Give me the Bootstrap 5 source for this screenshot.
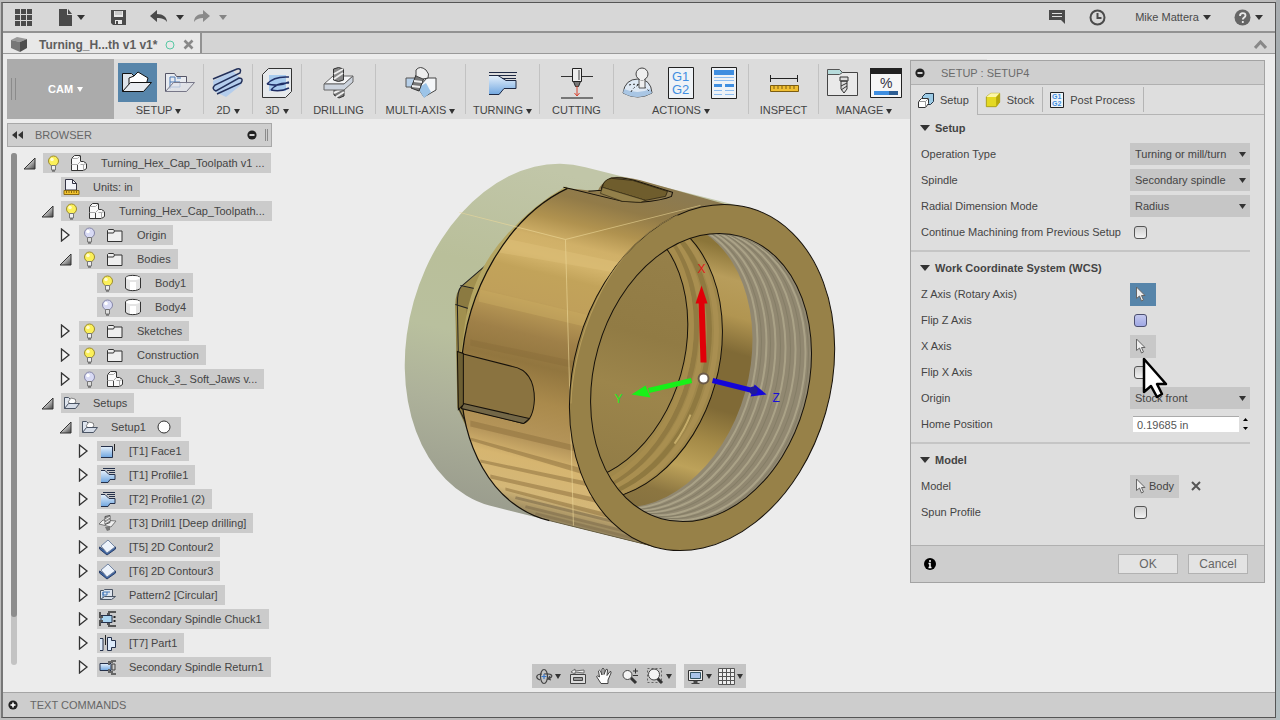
<!DOCTYPE html>
<html lang="en">
<head>
<meta charset="utf-8">
<meta name="viewport" content="width=device-width, initial-scale=1">
<title>Turning_Hex_Cap_Toolpath v1</title>
<link href="https://cdn.jsdelivr.net/npm/bootstrap@5.3.0/dist/css/bootstrap.min.css" rel="stylesheet">
<script src="https://cdn.jsdelivr.net/npm/bootstrap@5.3.0/dist/js/bootstrap.bundle.min.js" defer></script>
<style>
  :root { --ink:#444; --chip:#cbcbcb; --blue:#5785aa; }
  body { font-family:"Liberation Sans",Arial,sans-serif; font-size:11px; line-height:16px; color:var(--ink);
         background:linear-gradient(180deg,#a9adb0,#8fa5a8 50%,#b4bfc2); overflow:hidden; }
  button, select, input { font:inherit; color:inherit; }
  button { border:0; background:none; padding:0; white-space:nowrap; }
  .app-frame { margin-right:4px; padding-bottom:2px; background:#bcbcbc; }
  .app-shell { border:1px solid #555; border-left:2px solid #777; margin:2px 0 0 1px; background:#ececec; }
  .top-bar { height:30px; background:#d7d7d7; border-bottom:2px solid #929292; color:#4a4a4a; }
  .top-bar button { height:28px; display:flex; align-items:center; justify-content:center; }
  .help-btn { width:30px; margin-right:12px; }
  .crt { display:inline-block; border:3px solid transparent; border-top:5px solid #333; border-bottom:0; vertical-align:middle; }
  .top-bar .crt { border-width:4px 4px 0; border-top-width:5px; }
  .crt.dim { border-top-color:#858585; }
  .doc-tabs { height:21px; background:#d4d4d4; border-bottom:1px solid #999; }
  .doc-tab { width:199px; background:#e8e8e8; border-right:2px solid #929292; font-weight:bold; font-size:12px; color:#5e5e5e; padding:3px 0 0 8px; }
  .ribbon { margin:5px 288px 0 4px; height:60px; background:#dcdcdc; }
  .cam-btn { width:107px; background:#ababab; color:#fff; font-weight:bold; }
  .cam-btn .crt { border-top-color:#fff; }
  .grip { width:5px; height:22px; border:solid #8b8b8b; border-width:0 1px; }
  .grp { border-right:1px solid #c2c2c2; margin:5px 0; height:50px; white-space:nowrap; }
  .grp:last-child { border:0; }
  .grp .icons { height:39px; display:flex; justify-content:center; align-items:center; margin-top:-1px; gap:4px; }
  .grp .icons button { width:39px; height:39px; display:flex; align-items:center; justify-content:center; }
  .grp .icons button.on { background:var(--blue); }
  .grp .cap { display:block; width:100%; text-align:center; line-height:14px; margin-top:1px; }
  .g-s { width:49px; } .g-i { width:70px; } .g-m { width:74px; } .g-l { width:90px; } .g-x { width:135px; }
  .browser { width:265px; margin:4px 0 0 4px; position:relative; }
  .browser-head { height:24px; background:#cecece; border:1px solid #a8a8a8; padding:0 3px 0 4px; color:#666; }
  .scroll-track { width:6px; height:512px; background:#c3c3c3; border-radius:3px; margin:6px 3px 0 4px; }
  .scroll-thumb { height:464px; background:#8d8d8d; border-radius:3px; }
  .tree { margin-top:4px; }
  .tree, .tree ul { list-style:none; padding:0; margin-bottom:0; }
  .tree ul { padding-left:18px; }
  .tree .node { display:flex; align-items:center; height:24px; white-space:nowrap; }
  .tw { width:23px; height:16px; display:flex; padding-left:3px; align-items:center; flex:none; }
  .chip { display:flex; align-items:center; height:20px; background:var(--chip); padding-right:7px; }
  .chip svg { width:20px; height:18px; flex:none; }
  .chip svg + svg { margin-left:6px; }
  .chip span { margin-left:12px; }
  .scene { position:absolute; inset:0; width:100%; height:100%; }
  .view-bar { position:absolute; bottom:4px; left:0; right:0; padding-right:1px; }
  .view-bar > div { background:#c4c4c4; height:24px; }
  .view-bar button { height:24px; display:flex; align-items:center; justify-content:center; width:26px; }
  .view-bar button.wide { width:33px; gap:2px; }
  .view-bar button.mid { width:31px; gap:2px; }
  .dlg { position:absolute; right:10px; top:6px; width:355px; border:1px solid #a3a3a3; background:#dedede; }
  .dlg-head { height:24px; background:#cfcfcf; border-bottom:1px solid #b0b0b0; color:#6b6b6b; padding-left:4px; }
  .dlg-tabs { height:30px; padding-top:2px; box-shadow:inset 0 -1px #b4b4b4; }
  .dlg-tabs button { border-right:1px solid #b4b4b4; margin-bottom:3px; display:flex; align-items:center; padding:0 8px 0 7px; gap:6px; }
  .dlg-tabs button.on { background:#dedede; margin-bottom:0; padding-bottom:3px; }
  .sect { border-bottom:2px solid #c5c5c5; margin-right:14px; padding-bottom:5px; margin-bottom:3px; }
  .sect:last-child { border:0; padding-bottom:20px; margin-bottom:0; }
  .sect h2 { font-size:11px; font-weight:bold; line-height:26px; margin:0; padding-left:9px; display:flex; align-items:center; gap:5px; }
  .sect h2 .crt { border-width:6px 5px 0; }
  .prop { display:flex; align-items:center; height:26px; padding-left:10px; position:relative; }
  .prop > label { width:209px; flex:none; }
  .sel { appearance:none; width:120px; height:22px; border:0; border-radius:0; padding:0 5px; color:#444;
    background:#c6c6c6 url("data:image/svg+xml,%3Csvg xmlns='http://www.w3.org/2000/svg' width='7' height='5'%3E%3Cpath d='M0 0h7L3.5 5z' fill='%23333'/%3E%3C/svg%3E") no-repeat right 4px center; }
  .tick { appearance:none; width:13px; height:13px; margin:0 0 0 4px; border:1px solid #555; border-radius:3px; background:linear-gradient(#cfcfcf,#f2f2f2); }
  .tick.hot { background:linear-gradient(#c3c8ee,#a0a8e4); border-color:#4c4f70; }
  .pick { height:23px; background:#c8c8c8; display:flex; align-items:center; padding:0 5px; gap:2px; }
  .pick.on { background:var(--blue); }
  .num { width:106px; height:16px; border:0; border-top:1px solid #aaa; background:#fff; padding:0 4px; margin-left:3px; color:#555; }
  .spin { width:12px; } .spin button { display:block; height:9px; line-height:0; width:12px; }
  .dlg-foot { height:37px; background:#cecece; border-top:1px solid #b0b0b0; padding:0 16px 0 13px; }
  .dlg-foot .act { width:60px; height:20px; background:#e3e3e3; border:1px solid #b2b2b2; font-size:12px; line-height:16px; color:#666; margin-left:10px; }
  .cursor { position:absolute; left:230px; top:-2px; z-index:2; }
  .cmd-bar { height:25px; background:#cdcdcd; border-top:1px solid #a5a5a5; color:#666; padding-left:5px; gap:12px; }
</style>
</head>
<body>
<svg width="0" height="0" class="position-absolute" aria-hidden="true">
  <defs>
    <linearGradient id="gBlue" x1="0" y1="0" x2="0" y2="1"><stop offset="0" stop-color="#e8f2fc"/><stop offset="1" stop-color="#6fa6e0"/></linearGradient>
    <linearGradient id="gTri" x1="0" y1="0" x2="1" y2="1"><stop offset=".3" stop-color="#eee"/><stop offset="1" stop-color="#444"/></linearGradient>
    <symbol id="open" viewBox="0 0 13 13"><path d="M12 1v11H1z" fill="url(#gTri)" stroke="#333"/></symbol>
    <symbol id="shut" viewBox="0 0 13 14"><path d="M2.500 1v12L10 7z" fill="#f4f4f4" stroke="#333" stroke-width="1.300"/></symbol>
    <symbol id="bulb" viewBox="0 0 20 18"><circle cx="10.500" cy="7" r="5" fill="#fbf05a" stroke="#9c8b2c"/><circle cx="9" cy="5.500" r="1.800" fill="#fffbd0"/><path d="M8.500 11.500h4v4.500h-4z" fill="#eee" stroke="#777"/><path d="M9 17h3" stroke="#444"/></symbol>
    <symbol id="bulbOff" viewBox="0 0 20 18"><circle cx="10.500" cy="7" r="5" fill="#d8daf4" stroke="#8586a8"/><circle cx="9" cy="5.500" r="1.800" fill="#fff"/><path d="M8.500 11.500h4v4.500h-4z" fill="#ddd" stroke="#777"/><path d="M9 17h3" stroke="#444"/></symbol>
    <symbol id="comp" viewBox="0 0 20 18"><path d="M2.500 4.500l3-3h6v6h3l3 2v5l-3 2H2.500z" fill="#fafafa" stroke="#333"/><path d="M2.500 4.500h6M8.500 4.500l3-3M2.500 10.500h6l3-3M11.500 10.500h3l3-1M14.500 10.500v6" fill="none" stroke="#aaa"/><path d="M8.500 11v5" stroke="#444"/></symbol>
    <symbol id="fold" viewBox="0 0 20 18"><path d="M2.500 15.500v-11l1-1h5l1 1.500h7.500v10.500z" fill="#efefef" stroke="#333"/><path d="M2.500 7h6l1-2" fill="none" stroke="#333"/></symbol>
    <symbol id="cyl" viewBox="0 0 20 18"><path d="M2.500 4v10c1 3.500 13 3.500 15 0V4c-2-3.500-14-3.500-15 0z" fill="#e4e4e4" stroke="#333"/><ellipse cx="10" cy="4" rx="7" ry="2" fill="#fff"/><path d="M7 8h6v8H7z" fill="#fff"/></symbol>
    <symbol id="unit" viewBox="0 0 20 18"><path d="M4.500 12V1.500h7l4 4V12z" fill="#f2f4fa" stroke="#334"/><path d="M11.500 1.500v4h4" fill="none" stroke="#334"/><path d="M3 12.500h15v4H3z" fill="#f2c32e" stroke="#8b6a10"/><path d="M5.500 13v2M8 13v2M10.500 13v2M13 13v2M15.500 13v2" stroke="#8b6a10"/></symbol>
    <symbol id="setup" viewBox="0 0 20 18"><path d="M3.500 14.500V3.500h4l2 2h5v4" fill="#dfe5ee" stroke="#4a5464"/><path d="M7 8l3-4 4 1 1 3-4 3z" fill="#fff" stroke="#888"/><path d="M3.500 14.500l4-5h11l-4 5z" fill="#d6dde8" stroke="#4a5464"/></symbol>
    <symbol id="pattern" viewBox="0 0 20 18"><path d="M3.500 13.500v-9h3l1-1h8v7" fill="#dfe5ee" stroke="#4a5464"/><path d="M6 6h4v3H6zM6 6v6M10 6h3" fill="none" stroke="#4377b8"/><path d="M3.500 13.500l4-3h11l-4 3z" fill="#d6dde8" stroke="#4a5464"/></symbol>
    <symbol id="face" viewBox="0 0 20 18"><path d="M4 4.500h11.500v11H4z" fill="url(#gBlue)"/><path d="M4 4.500h11.500v11H4" fill="none" stroke="#24304a"/><path d="M17.500 2v7" stroke="#222"/></symbol>
    <symbol id="prof" viewBox="0 0 20 18"><path d="M4 4.500h4l4 4h6v5h-5l-2 3H4z" fill="url(#gBlue)"/><path d="M4 4.500h4l4 4h6v5h-5l-2 3H4M6 2.500h12M10 4.500h8M12 6.500h6" fill="none" stroke="#24304a"/></symbol>
    <symbol id="drill" viewBox="0 0 20 18"><path d="M2 10l4-4 13 1-5 6z" fill="#eee" stroke="#777"/><path d="M8 2.500l5-1v7l-5 2z" fill="#999" stroke="#555"/><path d="M8 6l5-3M8 9l5-3" stroke="#eee"/><path d="M8 13l5-1v4l-3 1z" fill="#777"/></symbol>
    <symbol id="cont" viewBox="0 0 20 18"><path d="M2.500 9v2l7.500 6 8.500-6V9l-8 5z" fill="#3d66a6" stroke="#2c4068"/><path d="M4 8l7-6 7 7-8 6z" fill="#edf3fb" stroke="#7285a4"/></symbol>
    <symbol id="chuck" viewBox="0 0 20 18"><path d="M4 5.500h11v7H4z" fill="#a9d4f0" stroke="#24304a"/><path d="M3 2v5h3M3 16v-5h3M10 4h2V2h7M10 14h2v2h7" fill="none" stroke="#555" stroke-width="2"/><path d="M17.500 6v6" stroke="#222" stroke-width="2" stroke-dasharray="2 2"/></symbol>
    <symbol id="part" viewBox="0 0 20 18"><path d="M3 4.500h3v12H3M10.500 3.500h4v3h4v7h-4v3h-4z" fill="#dceafa" stroke="#24304a"/><path d="M8.500 1v10" stroke="#222"/></symbol>
    <symbol id="ret" viewBox="0 0 20 18"><path d="M3 5.500h11v7H3z" fill="url(#gBlue)" stroke="#24304a"/><path d="M12 7V4h3V3h4M12 11v3h3v2h4" fill="none" stroke="#666" stroke-width="2"/><path d="M15 6h3v6h-3z" fill="#ccc" stroke="#444"/></symbol>
    <symbol id="arrow" viewBox="0 0 12 16"><path d="M1.500 1v11.500l3-2.500 2 5 2-1-2-4.500H10z" fill="#eee" stroke="#666"/></symbol>
    <symbol id="minus" viewBox="0 0 10 10"><circle cx="5" cy="5" r="4.600" fill="#222"/><path d="M2.500 5h5" stroke="#fff" stroke-width="1.600"/></symbol>
    <symbol id="cube" viewBox="0 0 18 18"><path d="M1.500 5.500l5-4h10v10l-4 5h-11z" fill="#e4d922" stroke="#a59b12"/><path d="M1.500 5.500l5-4h10l-4 4z" fill="#fbf6a8"/><path d="M12.500 5.500l4-4v10l-4 5z" fill="#b8a90c"/></symbol>
  </defs>
</svg>

<div class="app-frame vh-100 d-flex flex-column">
<div class="app-shell flex-grow-1 d-flex flex-column">

  <header class="top-bar d-flex align-items-center flex-shrink-0">
    <button style="width:40px" aria-label="Data panel"><svg width="17" height="17" fill="#4a4a4a"><path d="M0 0h5v5H0zM6 0h5v5H6zM12 0h5v5h-5zM0 6h5v5H0zM6 6h5v5H6zM12 6h5v5h-5zM0 12h5v5H0zM6 12h5v5H6zM12 12h5v5h-5z"/></svg></button>
    <button class="ms-1 gap-1" style="width:48px" aria-label="File"><svg width="15" height="17" fill="#4a4a4a"><path d="M1 0h8v6h5v11H1zM10 0l4 5h-4z"/></svg><span class="crt"></span></button>
    <button class="ms-2" style="width:30px" aria-label="Save"><svg width="17" height="17"><path d="M1 1h15v15H3l-2-2z" fill="#4a4a4a"/><path d="M4 2h9v6H4zM5 11h7v4H5z" fill="#e8e8e8"/><path d="M5 3h7M5 5h7" stroke="#aaa"/><path d="M6 12h2v3H6z" fill="#4a4a4a"/></svg></button>
    <button class="ms-3 gap-2" style="width:36px" aria-label="Undo"><svg width="18" height="14" fill="#4a4a4a"><path d="M7 0v4c6 0 10 3 10 8-2-3-5-4-10-4v4L0 6z"/></svg><span class="crt"></span></button>
    <button class="ms-1 gap-2" style="width:42px" aria-label="Redo"><svg width="18" height="14" fill="#8a8a8a"><path d="M10 0v4C4 4 1 7 1 12c2-3 5-4 9-4v4l7-6z"/></svg><span class="crt dim"></span></button>
    <div class="d-flex ms-auto align-items-center">
      <button style="width:40px" aria-label="Comments"><svg width="17" height="16"><path d="M0 1h16v14l-4-4H0z" fill="#4a4a4a"/><path d="M3 4.500h10M3 7.500h10" stroke="#ddd"/></svg></button>
      <button style="width:40px" aria-label="Job status"><svg width="17" height="17" fill="none" stroke="#4a4a4a" stroke-width="2"><circle cx="8.500" cy="8.500" r="7"/><path d="M8.500 4v5h4"/></svg></button>
      <button class="gap-1 ps-3" style="width:96px">Mike Mattera <span class="crt"></span></button>
      <button class="help-btn gap-1" style="margin-left:20px" aria-label="Help"><svg width="17" height="17"><circle cx="8.500" cy="8.500" r="8" fill="#666"/><path d="M6 7c0-4 5.500-3.500 5.500-.5 0 2-2.700 2-2.700 4M8.800 12v2" fill="none" stroke="#e8e8e8" stroke-width="1.800"/></svg><span class="crt"></span></button>
    </div>
  </header>

  <nav class="doc-tabs d-flex flex-shrink-0 pe-2">
    <div class="doc-tab d-flex align-items-center">
      <svg width="16" height="16" class="me-2 flex-shrink-0"><path d="M0 3l6-3 10 2-7 3z" fill="#999"/><path d="M0 3l9 2v10l-9-4z" fill="#777"/><path d="M9 5l7-3v9l-7 4z" fill="#4e4e4e"/></svg>
      <span class="text-nowrap ps-1">Turning_H...th v1 v1*</span>
      <svg width="10" height="10" class="ms-2"><circle cx="5" cy="5" r="4" fill="none" stroke="#58c8a4"/></svg>
      <button class="d-flex ms-2" aria-label="Close tab"><svg width="11" height="11"><path d="M1.500 1.500l8 8M9.500 1.500l-8 8" stroke="#888" stroke-width="2.600"/></svg></button>
    </div>
    <button class="ms-auto" aria-label="Collapse"><svg width="13" height="9"><path d="M1 8l5.500-6L12 8" fill="none" stroke="#888" stroke-width="3"/></svg></button>
  </nav>

  <main class="flex-grow-1 position-relative d-flex flex-column">
    <svg class="scene" viewBox="3 56 1271 635" preserveAspectRatio="xMidYMid meet" role="img" aria-label="Hex cap model">
      <defs>
        <linearGradient id="stock" gradientUnits="userSpaceOnUse" x1="520" y1="164" x2="440" y2="510"><stop offset="0" stop-color="#c1c6a8"/><stop offset=".3" stop-color="#b9bf9a"/><stop offset=".5" stop-color="#b9c09e"/><stop offset=".7" stop-color="#adb19a"/><stop offset="1" stop-color="#989a8c"/></linearGradient>
        <linearGradient id="skin" gradientUnits="userSpaceOnUse" x1="600" y1="180" x2="518" y2="520">
          <stop offset="0" stop-color="#8c7a50"/><stop offset=".07" stop-color="#927b48"/><stop offset=".14" stop-color="#b0924f"/><stop offset=".2" stop-color="#d0b068"/><stop offset=".25" stop-color="#d4b56c"/><stop offset=".3" stop-color="#c2a35a"/><stop offset=".38" stop-color="#c0a05a"/><stop offset=".48" stop-color="#9f8048"/><stop offset=".56" stop-color="#92763f"/><stop offset=".66" stop-color="#aa8a4c"/><stop offset=".77" stop-color="#b5955a"/><stop offset=".83" stop-color="#d6b570"/><stop offset=".92" stop-color="#d4b778"/><stop offset=".97" stop-color="#9c8a60"/><stop offset="1" stop-color="#8f8466"/></linearGradient>
        <linearGradient id="wall" x1="0" y1="0" x2="0" y2="1"><stop offset=".04" stop-color="#8b7539"/><stop offset=".14" stop-color="#b89d5b"/><stop offset=".26" stop-color="#b19551"/><stop offset=".38" stop-color="#806a36"/><stop offset=".58" stop-color="#806a36"/><stop offset=".7" stop-color="#a58b48"/><stop offset=".8" stop-color="#bda25a"/><stop offset=".9" stop-color="#8c7641"/><stop offset="1" stop-color="#84703f"/></linearGradient>
        <linearGradient id="dish" x1="0" y1="0" x2="0" y2="1"><stop offset="0" stop-color="#97814a"/><stop offset=".4" stop-color="#917b44"/><stop offset=".6" stop-color="#9c854b"/><stop offset="1" stop-color="#8f7a45"/></linearGradient>
        <ellipse id="bore" rx="107" ry="146.500" transform="translate(700.500 378) rotate(15.700)"/>
        <clipPath id="boreClip"><use href="#bore"/></clipPath>
        <path id="body" d="M567 189A128 176 15.800 0 0 549 521L654 547L740 215L725 205L640 181Q620 176 611 178Q600 184 597 192z"/>
        <clipPath id="bodyClip"><use href="#body"/></clipPath>
      </defs>
      <path d="M585 168A128 175 15.800 0 0 489 506L654 547L740 207z" fill="url(#stock)"/>
      <path d="M492 260L461 287Q455 293 455 305L457 408L466 428L482 440L478 300z" fill="#8b7a41"/>
      <path d="M492 260L461 287L473 289L478 292zM455 305L466 309V355H457z" fill="#a1904f"/>
      <path d="M490 262L461 287Q457 291 457 305L459 410L466 424M455 305L468 309M460 286L474 289M461 354V408" fill="none" stroke="#222"/>
      <path d="M567 189Q535 207 509 236Q474 274 467 325L463 356" fill="none" stroke="#b5a663" stroke-width="5"/>
      <use href="#body" fill="url(#skin)"/>
      <g clip-path="url(#bodyClip)">
        <path d="M500 238L690 278V286L492 252z" fill="#e2c47c" opacity=".4"/>
        <path d="M480 290L690 340V352L478 302z" fill="#cdae64" opacity=".4"/>
        <path d="M470 340L690 386V394L470 346z" fill="#7e6434" opacity=".25"/>
        <path d="M470 421L600 452V458L470 427zM470 438L600 474V480L470 441zM480 460L620 489V494L480 463zM490 475L630 506V511L490 479zM505 488L640 522V527L505 491z" fill="#8f7340" opacity=".55"/>
        <path d="M515 498L650 531M525 507L650 538M535 514L650 543" stroke="#877451" stroke-width="3" opacity=".7"/>
      </g>
      <path d="M567 189A128 176 15.800 0 0 549 521" fill="none" stroke="#16110a" stroke-width="1.200"/>
      <path d="M549 521L654 547" stroke="#5c5236"/>
      <path d="M563 188L572 190L622 202L640 203Q662 201 671 197L672 193L640 183Q622 177 610 179Q601 183 601 191L588 192" fill="none" stroke="#16110a"/>
      <path d="M602 188Q603 180 611 179L632 181L667 192L665 197L645 201z" fill="#6f5d2d" stroke="#2a210e" stroke-width=".8"/>
      <path d="M602 188L645 201L640 203L622 202L600 194z" fill="#93804a" stroke="#2a210e" stroke-width=".6"/>
      <path d="M461 354L512 367Q534 371 534 400Q533 420 523 424L461 408z" fill="#8a7340" stroke="#16110a"/>
      <path d="M463 404L529 419L523 424L461 409z" fill="#736747" stroke="#16110a"/>
      <path d="M457 352L463 354V405L458 410z" fill="#6d5f33" stroke="#16110a"/>
      <path d="M459 213L565 240L700 206M565 240L573 526" fill="none" stroke="#ecd99a" opacity=".6"/>
      <g transform="translate(701.500 378) rotate(15.800)"><ellipse rx="128.400" ry="176" fill="#978148" stroke="#16110a"/></g>
      <path d="M570.500 404C572 350 600 250 677 216" fill="none" stroke="#c5a965" opacity=".7"/>
      <use href="#bore" fill="#918871"/>
      <g clip-path="url(#boreClip)" fill="none">
        <g stroke="#aaa287" stroke-width="2"><use href="#bore" x="-6" y="-1"/><use href="#bore" x="-16" y="-4"/><use href="#bore" x="-26" y="-6"/><use href="#bore" x="-36" y="-9"/><use href="#bore" x="-45" y="-11"/><use href="#bore" x="-54" y="-13"/></g>
        <g stroke="#857e67" stroke-width="1"><use href="#bore" x="-3"/><use href="#bore" x="-11" y="-3"/><use href="#bore" x="-21" y="-5"/><use href="#bore" x="-31" y="-8"/><use href="#bore" x="-41" y="-10"/><use href="#bore" x="-50" y="-12"/></g>
        <use href="#bore" x="-59" y="-14" fill="url(#wall)"/>
        <use href="#bore" x="-89" y="-22" fill="#a0884b" stroke="#16110a"/>
        <g stroke-width="5"><use href="#bore" x="-95" y="-23" stroke="#a98f51"/><use href="#bore" x="-102" y="-24" stroke="#8f7940"/><use href="#bore" x="-109" y="-25" stroke="#a98f50"/><use href="#bore" x="-115" y="-27" stroke="#917a42"/><use href="#bore" x="-120" y="-28" stroke="#a68c4d"/></g>
        <path d="M690 415Q684 430 674 444" stroke="#dcc27a" stroke-width="2" opacity=".7"/>
        <g transform="translate(585 348) rotate(15.700)"><ellipse rx="99" ry="137" fill="url(#dish)" stroke="#16110a"/></g>
      </g>
      <use href="#bore" fill="none" stroke="#16110a"/>
      <path d="M703 363L701 303" stroke="#e00008" stroke-width="6"/><path d="M701 286L707 304H695z" fill="#e00008"/>
      <path d="M691 381L648 391" stroke="#18f018" stroke-width="5"/><path d="M631 395L645 386L650 398z" fill="#18f018"/>
      <path d="M712 381L752 391" stroke="#1406d8" stroke-width="5"/><path d="M766 395L754 385L750 397z" fill="#1406d8"/><circle cx="753" cy="391" r="4" fill="#201a9a"/>
      <circle cx="703" cy="379" r="5" fill="#fff" stroke="#6b5a48" stroke-width="2"/>
      <g font-size="12"><text x="697" y="274" fill="#e01818">X</text><text x="614" y="403" fill="#20ee20">Y</text><text x="772" y="402" fill="#1810d8">Z</text></g>
    </svg>

    <div class="ribbon d-flex position-relative flex-shrink-0">
      <button class="cam-btn d-flex align-items-center flex-shrink-0"><span class="grip ms-1"></span><span class="ms-4 ps-2">CAM</span><span class="crt ms-1"></span></button>
      <div class="grp g-l flex-shrink-0"><div class="icons">
        <button class="on" aria-label="Setup"><svg width="34" height="28"><path d="M2.500 22.500V4.500h9l3 3h9v7" fill="#dfe4ea" stroke="#111"/><path d="M9 9l5-2 4-4 10 6-2 7-7 3h-7l-3-4z" fill="#fff" stroke="#111"/><path d="M2.500 22.500l8-9h21l-8 9z" fill="#e8ebef" stroke="#111"/></svg></button>
        <button aria-label="Folder"><svg width="34" height="28"><path d="M2.500 22.500V4.500h9l2 3h10v7" fill="#e8ebf0" stroke="#556"/><path d="M7 8v12M7 8h5v5H7M12 13h5v5H7M14 9h4" fill="none" stroke="#4a78b4"/><path d="M2.500 22.500l8-9h21l-8 9z" fill="#dfe3ea" fill-opacity=".7" stroke="#778"/></svg></button></div>
        <button class="cap">SETUP <span class="crt"></span></button></div>
      <div class="grp g-s flex-shrink-0"><div class="icons"><button aria-label="2D"><svg width="34" height="34"><path d="M2 15L22 5l8 8v6L15 31 3 25z" fill="#b4cdec"/><path d="M2 13L26 3q5-1 3 4L4 19q-4 4 1 6L28 12q5 0 2 5L6 28" fill="none" stroke="#22305a" stroke-width="1.500"/></svg></button></div><button class="cap">2D <span class="crt"></span></button></div>
      <div class="grp g-s flex-shrink-0"><div class="icons"><button aria-label="3D"><svg width="32" height="32"><path d="M1.500 7.500l6-6h23v23l-6 6h-23z" fill="#e6e9ec" stroke="#333"/><path d="M8 8h17v16H8z" fill="#a8cbee"/><path d="M6 17q7-8 22-7M6 17q12 3 22-2M10 23q6-8 18-7M10 23q10 2 18-2" fill="none" stroke="#1f2e66" stroke-width="1.500"/></svg></button></div><button class="cap">3D <span class="crt"></span></button></div>
      <div class="grp g-m flex-shrink-0"><div class="icons"><button aria-label="Drilling"><svg width="34" height="34"><path d="M12 22h10v8l-5 2-5-3z" fill="#777" stroke="#333"/><path d="M12 27l10-5M14 31l8-5" stroke="#eee" stroke-width="2"/><path d="M2 18l9-8h20l-9 8z" fill="#f4f5f7" stroke="#666"/><path d="M2 18h20l9-8v6l-9 8H2z" fill="#cdd4de" stroke="#666"/><path d="M11.500 3q5-3 10 0v11q-5 3-10 0z" fill="#888" stroke="#333"/><path d="M12 8l9-5M12 13l9-6" stroke="#eee" stroke-width="2"/></svg></button></div><button class="cap">DRILLING</button></div>
      <div class="grp g-l flex-shrink-0"><div class="icons"><button aria-label="Multi-axis"><svg width="34" height="34"><path d="M2 12h12v9H2z" fill="#b6cfe8" stroke="#555"/><path d="M14 22l9-10h9v12L20 31z" fill="#f4f6f8" stroke="#444"/><path d="M14 22l8-5 5 9-7 6z" fill="#9cc4e8"/><path d="M12 9l8 3-5 13-8-3z" fill="#777" stroke="#333"/><path d="M10 15l8 1M8 20l8 1" stroke="#eee" stroke-width="2"/><path d="M12 4q4-5 10 0 4 4 2 8l-5 1-7-3z" fill="#eee" stroke="#444"/></svg></button></div><button class="cap">MULTI-AXIS <span class="crt"></span></button></div>
      <div class="grp g-m flex-shrink-0"><div class="icons"><button aria-label="Turning"><svg width="30" height="28"><path d="M1 6h9l8 6h10v8H16l-5 6H1z" fill="url(#gBlue)"/><path d="M1 6.500h9l8 5h10v8H16l-5 6H1M1 3.500h28M10 6.500h18M14 9.500h14" fill="none" stroke="#1f2a44"/></svg></button></div><button class="cap">TURNING <span class="crt"></span></button></div>
      <div class="grp g-m flex-shrink-0"><div class="icons"><button aria-label="Cutting"><svg width="34" height="34"><path d="M1 10.500h32" stroke="#333"/><path d="M12.500 2.500h9v13h-9z" fill="#eee" stroke="#222"/><path d="M19 4v10" stroke="#999" stroke-width="2"/><path d="M13.500 15.500h7l-2 5h-3z" fill="#777" stroke="#222"/><path d="M17 20v10M14.500 27l2.500 3 2.500-3" fill="none" stroke="#d8402c"/><path d="M1 32h32" stroke="#777" stroke-width="2"/></svg></button></div><button class="cap">CUTTING</button></div>
      <div class="grp g-x flex-shrink-0"><div class="icons">
        <button aria-label="Simulate"><svg width="34" height="34"><path d="M2 27Q4 13 17 13t14 14q-14 8-29 0z" fill="#dfe9f4" stroke="#444"/><path d="M2 27q14 8 29 0l-2-4q-12 6-26 0z" fill="#a9c6e4"/><path d="M8 19q12-3 20 6M10 26q4-8 14-8" fill="none" stroke="#333" stroke-dasharray="2 2"/><path d="M18 11h6v11h-6z" fill="#eee" stroke="#555"/><circle cx="21" cy="8" r="6" fill="#eee" stroke="#444"/><path d="M19 11h4v3h-4z" fill="#eee"/></svg></button>
        <button aria-label="Post process"><svg width="26" height="32"><path d="M.5.500h25v31H.5z" fill="#eef2f6" stroke="#222"/><g font-size="13" fill="#3f8ee0"><text x="4" y="14">G1</text><text x="4" y="27">G2</text></g></svg></button>
        <button aria-label="Setup sheet"><svg width="26" height="32"><path d="M.5.500h25v31H.5z" fill="#eef2f6" stroke="#222"/><path d="M3 3h20v5H3zM3 17h8v3H3zM14 17h9v3h-9z" fill="#3f8ee0"/><path d="M3 10.500h20M3 13.500h20M3 23.500h8M14 23.500h9M3 27.500h8M14 27.500h9" stroke="#8dbdf0"/></svg></button></div>
        <button class="cap">ACTIONS <span class="crt"></span></button></div>
      <div class="grp g-i flex-shrink-0"><div class="icons"><button aria-label="Measure"><svg width="32" height="24"><path d="M2 7.500h28M2.500 4v7M29.500 4v7" stroke="#222"/><path d="M2.500 14.500h28v6h-28z" fill="#f0bf32" stroke="#7d5d10"/><path d="M6 15v3M10 15v3M14 15v3M18 15v3M22 15v3M26 15v3" stroke="#7d5d10"/></svg></button></div><button class="cap">INSPECT</button></div>
      <div class="grp g-l flex-shrink-0"><div class="icons">
        <button aria-label="Tool library"><svg width="34" height="32"><path d="M1.500 28.500v-23h30v23z" fill="#e9e9e9" stroke="#444"/><path d="M1.500 7.500v-5h12l3 3-3 2z" fill="#b7dcdc" stroke="#555"/><path d="M14 10h8v4h-8zM15 14h6v8l-3 4-3-4z" fill="#ddd" stroke="#333"/><path d="M15 19l6-3M15 23l6-4" stroke="#333"/></svg></button>
        <button aria-label="Task manager"><svg width="34" height="34"><path d="M1.500 2.500h31v29h-31z" fill="#f6f6f6" stroke="#222"/><path d="M1 2h32v6H1z" fill="#222"/><path d="M5 25h15v4H5z" fill="#3f8ee0"/><path d="M20 25h9v4h-9z" fill="#2f5f94"/><text x="11" y="22" font-size="14" fill="#334">%</text></svg></button></div>
        <button class="cap">MANAGE <span class="crt"></span></button></div>
    </div>

    <section class="browser">
      <div class="browser-head d-flex align-items-center">
        <svg width="11" height="8"><path d="M5 0v8L0 4zM11 0v8L6 4z" fill="#333"/></svg><span class="ms-2 ps-1">BROWSER</span>
        <svg class="ms-auto me-2" width="10" height="10"><use href="#minus"/></svg><span class="grip" style="height:12px;width:3px"></span>
      </div>
      <div class="d-flex">
        <div class="scroll-track flex-shrink-0"><div class="scroll-thumb"></div></div>
        <ul class="tree">
          <li><div class="node"><span class="tw"><svg width="13" height="13"><use href="#open"/></svg></span><div class="chip"><svg><use href="#bulb"/></svg><svg><use href="#comp"/></svg><span>Turning_Hex_Cap_Toolpath v1 ...</span></div></div>
          <ul>
            <li class="node"><span class="tw"></span><div class="chip"><svg><use href="#unit"/></svg><span>Units: in</span></div></li>
            <li><div class="node"><span class="tw"><svg width="13" height="13"><use href="#open"/></svg></span><div class="chip"><svg><use href="#bulb"/></svg><svg><use href="#comp"/></svg><span>Turning_Hex_Cap_Toolpath...</span></div></div>
            <ul>
              <li class="node"><span class="tw"><svg width="13" height="14"><use href="#shut"/></svg></span><div class="chip"><svg><use href="#bulbOff"/></svg><svg><use href="#fold"/></svg><span>Origin</span></div></li>
              <li><div class="node"><span class="tw"><svg width="13" height="13"><use href="#open"/></svg></span><div class="chip"><svg><use href="#bulb"/></svg><svg><use href="#fold"/></svg><span>Bodies</span></div></div>
              <ul>
                <li class="node"><span class="tw"></span><div class="chip"><svg><use href="#bulb"/></svg><svg><use href="#cyl"/></svg><span>Body1</span></div></li>
                <li class="node"><span class="tw"></span><div class="chip"><svg><use href="#bulbOff"/></svg><svg><use href="#cyl"/></svg><span>Body4</span></div></li>
              </ul></li>
              <li class="node"><span class="tw"><svg width="13" height="14"><use href="#shut"/></svg></span><div class="chip"><svg><use href="#bulb"/></svg><svg><use href="#fold"/></svg><span>Sketches</span></div></li>
              <li class="node"><span class="tw"><svg width="13" height="14"><use href="#shut"/></svg></span><div class="chip"><svg><use href="#bulb"/></svg><svg><use href="#fold"/></svg><span>Construction</span></div></li>
              <li class="node"><span class="tw"><svg width="13" height="14"><use href="#shut"/></svg></span><div class="chip"><svg><use href="#bulbOff"/></svg><svg><use href="#comp"/></svg><span>Chuck_3_ Soft_Jaws v...</span></div></li>
            </ul></li>
            <li><div class="node"><span class="tw"><svg width="13" height="13"><use href="#open"/></svg></span><div class="chip"><svg><use href="#setup"/></svg><span>Setups</span></div></div>
            <ul>
              <li><div class="node"><span class="tw"><svg width="13" height="13"><use href="#open"/></svg></span><div class="chip"><svg><use href="#setup"/></svg><span>Setup1</span><svg class="ms-2" viewBox="0 0 20 18"><circle cx="10" cy="9" r="6" fill="#fff" stroke="#333"/></svg></div></div>
              <ul>
                <li class="node"><span class="tw"><svg width="13" height="14"><use href="#shut"/></svg></span><div class="chip"><svg><use href="#face"/></svg><span>[T1] Face1</span></div></li>
                <li class="node"><span class="tw"><svg width="13" height="14"><use href="#shut"/></svg></span><div class="chip"><svg><use href="#prof"/></svg><span>[T1] Profile1</span></div></li>
                <li class="node"><span class="tw"><svg width="13" height="14"><use href="#shut"/></svg></span><div class="chip"><svg><use href="#prof"/></svg><span>[T2] Profile1 (2)</span></div></li>
                <li class="node"><span class="tw"><svg width="13" height="14"><use href="#shut"/></svg></span><div class="chip"><svg><use href="#drill"/></svg><span>[T3] Drill1 [Deep drilling]</span></div></li>
                <li class="node"><span class="tw"><svg width="13" height="14"><use href="#shut"/></svg></span><div class="chip"><svg><use href="#cont"/></svg><span>[T5] 2D Contour2</span></div></li>
                <li class="node"><span class="tw"><svg width="13" height="14"><use href="#shut"/></svg></span><div class="chip"><svg><use href="#cont"/></svg><span>[T6] 2D Contour3</span></div></li>
                <li class="node"><span class="tw"><svg width="13" height="14"><use href="#shut"/></svg></span><div class="chip"><svg><use href="#pattern"/></svg><span>Pattern2 [Circular]</span></div></li>
                <li class="node"><span class="tw"><svg width="13" height="14"><use href="#shut"/></svg></span><div class="chip"><svg><use href="#chuck"/></svg><span>Secondary Spindle Chuck1</span></div></li>
                <li class="node"><span class="tw"><svg width="13" height="14"><use href="#shut"/></svg></span><div class="chip"><svg><use href="#part"/></svg><span>[T7] Part1</span></div></li>
                <li class="node"><span class="tw"><svg width="13" height="14"><use href="#shut"/></svg></span><div class="chip"><svg><use href="#ret"/></svg><span>Secondary Spindle Return1</span></div></li>
              </ul></li>
            </ul></li>
          </ul></li>
        </ul>
      </div>
    </section>

    <div class="view-bar d-flex justify-content-center">
      <div class="d-flex me-2">
        <button class="wide" aria-label="Orbit"><svg width="17" height="17" fill="none" stroke="#444" stroke-width="1.200"><ellipse cx="8" cy="8.500" rx="3.500" ry="7"/><path d="M4 12C-1 10 0 6 6 6M8 6c9-1 10 3 4 5l2-3M12 11l3 1"/><path d="M8 6v5M5.500 8.500h5" stroke="#3c78c8"/></svg><span class="crt"></span></button>
        <button aria-label="Look at"><svg width="18" height="18"><path d="M1.500 7.500h15v9h-15z" fill="#ddd" stroke="#444"/><path d="M4.500 10.500h9v3h-9z" fill="#999" stroke="#444"/><path d="M2 5l4-3v2l9-1v3L6 5v2z" fill="#eee" stroke="#555" stroke-width=".8"/></svg></button>
        <button aria-label="Pan"><svg width="18" height="18"><path d="M6 16.500L1.500 9.500q1-1.500 3 .5L3.500 4q1-1.500 2 0l1.500 4V2q1-1.500 2 0v5.500L11 2.500q1.500-.8 1.500.5L12 8.500l3-4q1.500-.3 1 1.500L13 13v3.500z" fill="#fff" stroke="#444"/></svg></button>
        <button aria-label="Zoom"><svg width="18" height="18"><path d="M9 10l6 6" stroke="#333" stroke-width="3"/><circle cx="6.500" cy="8" r="4.500" fill="#f4f4f4" stroke="#444"/><path d="M12 4h5M14.500 1.500v5M12 8.500h5" stroke="#333"/></svg></button>
        <button class="wide" aria-label="Fit"><svg width="18" height="18"><path d="M1.500 1.500h14v14h-14z" fill="none" stroke="#666" stroke-dasharray="2 2"/><path d="M11 11l5 5" stroke="#333" stroke-width="3"/><circle cx="8" cy="7.500" r="5.500" fill="#f4f4f4" stroke="#444"/></svg><span class="crt"></span></button>
      </div>
      <div class="d-flex">
        <button class="mid" aria-label="Display settings"><svg width="17" height="17"><path d="M1.500 2.500h14v10h-14z" fill="#eee" stroke="#333"/><path d="M3.500 4.500h10v6h-10z" fill="#a9c4ea" stroke="#356"/><path d="M7 13h3v2H7zM4.500 15.500h8" fill="#555" stroke="#444"/></svg><span class="crt"></span></button>
        <button class="mid" aria-label="Grid settings"><svg width="17" height="17"><path d="M.5.500h16v16H.5z" fill="#eee"/><path d="M.5.500h16v16H.5zM4.500 0v17M8.500 0v17M12.500 0v17M0 4.500h17M0 8.500h17M0 12.500h17" fill="none" stroke="#555"/></svg><span class="crt"></span></button>
      </div>
    </div>

    <aside class="dlg">
      <div class="dlg-head d-flex align-items-center"><svg width="10" height="10" class="me-3"><use href="#minus"/></svg>SETUP : SETUP4</div>
      <div class="dlg-tabs d-flex">
        <button class="on"><svg width="16" height="16"><path d="M4.500 4.500l3-3h8v8l-3 3h-8z" fill="#9ccbe6" stroke="#234"/><path d="M.5 9.500l3-3h7v5l-3 4h-7z" fill="#fff" stroke="#333"/><path d="M.5 9.500h7v6M7.500 9.500l3-3" fill="none" stroke="#999"/></svg>Setup</button>
        <button><svg width="16" height="16"><use href="#cube"/></svg>Stock</button>
        <button><svg width="14" height="16"><path d="M.5.500h13v15H.5z" fill="#eef4fa" stroke="#222"/><g font-size="7" font-weight="bold" fill="#3f8ee0"><text x="2" y="7">G1</text><text x="2" y="14">G2</text></g></svg>Post Process</button>
      </div>
      <form>
        <div class="sect">
          <h2><span class="crt"></span>Setup</h2>
          <div class="prop"><label for="op">Operation Type</label><select id="op" class="sel"><option>Turning or mill/turn</option></select></div>
          <div class="prop"><label for="sp">Spindle</label><select id="sp" class="sel"><option>Secondary spindle</option></select></div>
          <div class="prop"><label for="rd">Radial Dimension Mode</label><select id="rd" class="sel"><option>Radius</option></select></div>
          <div class="prop"><label for="cm">Continue Machining from Previous Setup</label><input id="cm" type="checkbox" class="tick"></div>
        </div>
        <div class="sect">
          <h2><span class="crt"></span>Work Coordinate System (WCS)</h2>
          <div class="prop"><label for="za">Z Axis (Rotary Axis)</label><button id="za" type="button" class="pick on" aria-label="Select Z axis"><svg width="12" height="16" class="me-1"><use href="#arrow"/></svg></button></div>
          <div class="prop"><label for="fz">Flip Z Axis</label><input id="fz" type="checkbox" class="tick hot"></div>
          <div class="prop"><label for="xa">X Axis</label><button id="xa" type="button" class="pick" aria-label="Select X axis"><svg width="12" height="16" class="me-1"><use href="#arrow"/></svg></button></div>
          <div class="prop"><label for="fx">Flip X Axis</label><input id="fx" type="checkbox" class="tick">
            <svg class="cursor" width="28" height="42"><path d="M3 2v33l7-6 6 11 5-3-5-10h9z" fill="#fff" stroke="#000" stroke-width="2.500" stroke-linejoin="round"/></svg></div>
          <div class="prop"><label for="or">Origin</label><select id="or" class="sel"><option>Stock front</option></select></div>
          <div class="prop"><label for="hp">Home Position</label><input id="hp" class="num" type="text" value="0.19685 in">
            <span class="spin"><button type="button" aria-label="Increase"><svg width="5" height="3"><path d="M0 3h5L2.500 0z"/></svg></button><button type="button" aria-label="Decrease"><svg width="5" height="3"><path d="M0 0h5L2.500 3z"/></svg></button></span></div>
        </div>
        <div class="sect">
          <h2><span class="crt"></span>Model</h2>
          <div class="prop"><label for="mb">Model</label><button id="mb" type="button" class="pick"><svg width="12" height="16"><use href="#arrow"/></svg>Body</button><button type="button" class="d-flex ms-2 ps-1" aria-label="Clear"><svg width="10" height="10"><path d="M1 1l8 8M9 1L1 9" stroke="#555" stroke-width="2"/></svg></button></div>
          <div class="prop"><label for="spf">Spun Profile</label><input id="spf" type="checkbox" class="tick"></div>
        </div>
      </form>
      <div class="dlg-foot d-flex align-items-center">
        <svg width="12" height="12"><circle cx="6" cy="6" r="6" fill="#000"/><path d="M6 2v2M4.500 5.500H6V9M4.500 9.500h3" stroke="#fff" stroke-width="1.500" fill="none"/></svg>
        <button type="button" class="act ms-auto">OK</button><button type="button" class="act">Cancel</button>
      </div>
    </aside>
  </main>

  <footer class="cmd-bar d-flex align-items-center flex-shrink-0"><svg width="10" height="10"><use href="#minus"/><path d="M5 2.500v5" stroke="#fff" stroke-width="1.600"/></svg>TEXT COMMANDS</footer>
</div>
</div>
</body>
</html>
